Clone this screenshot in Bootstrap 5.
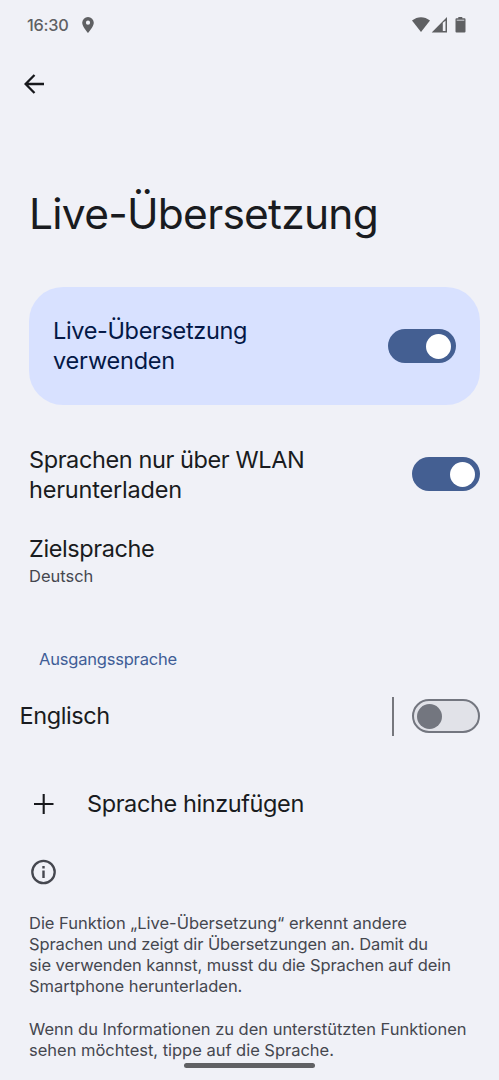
<!DOCTYPE html>
<html lang="de">
<head>
<meta charset="utf-8">
<meta name="viewport" content="width=device-width, initial-scale=1">
<title>Live-Übersetzung</title>
<link href="https://cdn.jsdelivr.net/npm/bootstrap@5.3.0/dist/css/bootstrap.min.css" rel="stylesheet">
<style>
body { background: #f0f1f7; color: #191b20; font-family: Inter, Roboto, sans-serif; }
.screen { width: 499px; height: 1080px; }
svg { display: block; flex: none; }
.statusbar { height: 50px; padding: 0 32px 0 27px; color: #5f6063; font-size: 16.3px; font-weight: 500; letter-spacing: -.2px; }
.statusbar .pin { margin-left: 13px; }
.toolbar { height: 68px; padding-left: 24px; }
.page-title { font-size: 42.5px; line-height: 52px; letter-spacing: -.75px; margin: 70px 0 0 29px; font-weight: 380; }
.item-title { font-size: 23.5px; line-height: 30px; letter-spacing: -.4px; font-weight: 370; }
.item-title .loose { letter-spacing: -.2px; }
.main-switch { margin: 47px 19.500px 0 29px; height: 118px; border-radius: 34px; background: #d8e1ff; color: #041846; padding: 0 24px; }
.main-switch .item-title { letter-spacing: -.35px; }
.toggle { width: 68px; height: 34px; border-radius: 17px; background: #445f92; padding: 0 5px; flex: none; }
.toggle::after { content: ""; width: 25px; height: 25px; border-radius: 50%; background: #fff; }
.toggle.is-off { background: #e1e2e8; border: 2px solid #73767f; padding: 0 3px; }
.toggle.is-off::after { background: #73767f; }
.inset { padding-left: 29px; padding-right: 19.500px; }
.secondary { font-size: 16.5px; line-height: 21.1px; color: #45474f; letter-spacing: -.02px; font-weight: 370; }
.tight { letter-spacing: -.1px; }
.category { padding-left: 39px; color: #405d96; letter-spacing: -.2px; }
.divider { width: 2px; height: 39px; background: #76777d; margin-right: 18px; }
.home-bar { left: 184px; top: 1063px; width: 131px; height: 5px; border-radius: 3px; background: #606164; }
</style>
</head>
<body>
<div class="screen position-relative overflow-hidden">
  <header>
    <div class="statusbar d-flex align-items-center">
      <span>16:30</span>
      <svg class="pin" width="12" height="16" viewBox="0 0 12 16"><path fill="currentColor" fill-rule="evenodd" d="M6 0a5.8 5.8 0 0 0-5.8 5.8C.2 9.800 6 16 6 16s5.800-6.200 5.800-10.200A5.800 5.800 0 0 0 6 0zm0 3.600a2.100 2.100 0 1 1 0 4.200 2.100 2.100 0 0 1 0-4.200z"/></svg>
      <svg class="ms-auto" width="55" height="18" viewBox="0 0 55 18" fill="currentColor">
        <path d="M0 4.500C5.500 0 12.500 0 18 4.500L9 16z"/>
        <path fill-rule="evenodd" d="M35 1v15.500H19.700zM30.800 6.800v8.200h2.700V4.800z"/>
        <path d="M46.300 1h4v1.200h2.200q1 0 1 1v12.300q0 1-1 1h-8q-1 0-1-1V3.200q0-1 1-1h1.800z"/><path fill="#d2d3d8" d="M44.700 3.700h7.600v1h-7.600z"/>
      </svg>
    </div>
    <div class="toolbar d-flex align-items-center">
      <svg width="20" height="20" viewBox="0 0 20 20" fill="none" stroke="#17181c" stroke-width="2.300"><path d="M20 10H2M10.500 1L1.600 10l8.900 9"/></svg>
    </div>
    <h1 class="page-title">Live-Übersetzung</h1>
  </header>
  <main>
    <div class="main-switch d-flex align-items-center justify-content-between">
      <div class="item-title">Live-Übersetzung<br><span class="loose">verwenden</span></div>
      <div class="toggle d-flex align-items-center justify-content-end" role="switch" aria-checked="true"></div>
    </div>
    <div class="inset d-flex align-items-center justify-content-between" style="margin-top:38px">
      <div class="item-title" style="padding-top:2px">Sprachen nur über WLAN<br><span class="loose">herunterladen</span></div>
      <div class="toggle d-flex align-items-center justify-content-end" role="switch" aria-checked="true"></div>
    </div>
    <div class="inset" style="margin-top:29px">
      <div class="item-title">Zielsprache</div>
      <div class="secondary" style="margin-top:2px">Deutsch</div>
    </div>
    <div class="secondary category" style="margin-top:62px">Ausgangssprache</div>
    <div class="inset d-flex align-items-center" style="margin-top:26.400px;padding-left:19.500px">
      <div class="item-title me-auto">Englisch</div>
      <div class="divider"></div>
      <div class="toggle is-off d-flex align-items-center" role="switch" aria-checked="false"></div>
    </div>
    <div class="inset d-flex align-items-center" style="margin-top:53.600px;padding-left:34px">
      <svg width="20" height="20" viewBox="0 0 20 20" stroke="#17181c" stroke-width="2.100"><path d="M0 10h19.500M9.700 0v20"/></svg>
      <div class="item-title" style="margin-left:33px">Sprache hinzufügen</div>
    </div>
    <div class="inset" style="margin-top:40px">
      <svg width="30" height="26" viewBox="0 0 30 26"><circle cx="14.500" cy="13" r="11.200" fill="none" stroke="#45474f" stroke-width="2.300"/><path fill="#45474f" d="M13.300 7h2.400v2.400h-2.400zM13.300 11.500h2.400v7.500h-2.400z"/></svg>
      <p class="secondary mb-0 text-nowrap" style="margin-top:28px">Die Funktion „Live-Übersetzung“ erkennt andere<br><span class="tight">Sprachen und zeigt dir Übersetzungen an. Damit du<br>sie verwenden kannst, musst du die Sprachen auf dein</span><br>Smartphone herunterladen.<br><br>Wenn du Informationen zu den unterstützten Funktionen<br>sehen möchtest, tippe auf die Sprache.</p>
    </div>
  </main>
  <div class="home-bar position-absolute"></div>
</div>
<script src="https://cdn.jsdelivr.net/npm/bootstrap@5.3.0/dist/js/bootstrap.bundle.min.js"></script>
</body>
</html>
